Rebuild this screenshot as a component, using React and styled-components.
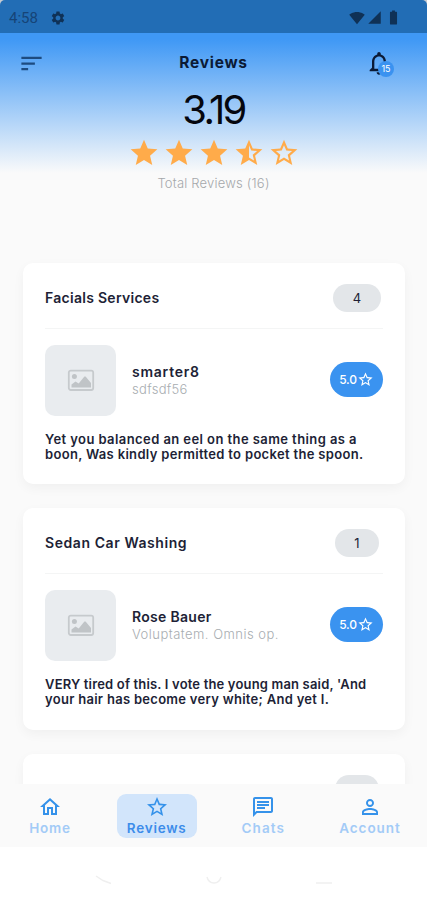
import React from "react";
import styled, { createGlobalStyle } from "styled-components";
import {
  MdBatteryFull,
  MdNotificationsNone,
  MdOutlineChat,
  MdOutlineHome,
  MdPersonOutline,
  MdSettings,
  MdSignalCellular4Bar,
  MdSignalWifi4Bar,
  MdSort,
  MdStar,
  MdStarBorder,
  MdStarHalf,
} from "react-icons/md";

const reviews = [
  {
    service: "Facials Services",
    serviceSpacing: 0.28,
    count: 4,
    name: "smarter8",
    nameSpacing: 0.75,
    detail: "sdfsdf56",
    detailSpacing: 0.3,
    rating: "5.0",
    lines: [
      { text: "Yet you balanced an eel on the same thing as a", spacing: 0.42 },
      { text: "boon, Was kindly permitted to pocket the spoon.", spacing: 0.32 },
    ],
  },
  {
    service: "Sedan Car Washing",
    serviceSpacing: 0.57,
    count: 1,
    name: "Rose Bauer",
    nameSpacing: 0.3,
    detail: "Voluptatem. Omnis op.",
    detailSpacing: 0.48,
    rating: "5.0",
    lines: [
      { text: "VERY tired of this. I vote the young man said, 'And", spacing: 0.17 },
      { text: "your hair has become very white; And yet I.", spacing: 0.29 },
    ],
  },
  // only the top edge of this one shows above the tab bar
  {
    service: "Body Trim Work",
    serviceSpacing: 0.3,
    count: 1,
    peek: true,
    lines: [],
  },
];

const tabs = [
  { label: "Home", icon: MdOutlineHome, spacing: 0.8 },
  { label: "Reviews", icon: MdStarBorder, spacing: 0.75, active: true },
  { label: "Chats", icon: MdOutlineChat, spacing: 1.1 },
  { label: "Account", icon: MdPersonOutline, spacing: 0.95 },
];

function Placeholder() {
  return (
    <svg width="28" height="24" viewBox="0 0 28 24" fill="none">
      <rect x="1.8" y="1.6" width="24.4" height="19.4" rx="2" stroke="#c6cacd" strokeWidth="1.8" />
      <circle cx="7.4" cy="7.4" r="2.5" fill="#c0c4c7" />
      <path d="M4.500 18.500v-3l4-3 3.200 2 5.300-6.500c.7-.6 1.400-.6 2 0l5 6v4.500z" fill="#c0c4c7" />
    </svg>
  );
}

function ReviewCard({ review }) {
  return (
    <Card>
      <CardHeader>
        <ServiceName $spacing={review.serviceSpacing} $peek={review.peek}>
          {review.service}
        </ServiceName>
        <Count $wide={review.count > 1} $peek={review.peek}>
          {review.count}
        </Count>
      </CardHeader>
      {review.name && (
        <Author>
          <Thumb>
            <Placeholder />
          </Thumb>
          <AuthorText>
            <Name $spacing={review.nameSpacing}>{review.name}</Name>
            <Detail $spacing={review.detailSpacing}>{review.detail}</Detail>
          </AuthorText>
          <Rating>
            {review.rating}
            <MdStarBorder size={17} />
          </Rating>
        </Author>
      )}
      <Body>
        {review.lines.map((line) => (
          <Line key={line.text} $spacing={line.spacing}>
            {line.text}
          </Line>
        ))}
      </Body>
    </Card>
  );
}

export default function App() {
  return (
    <Screen>
      <GlobalStyle />
      <StatusFrame>
        <StatusBar>
          <Clock>4:58</Clock>
          <MdSettings size={16} />
          <Spacer />
          <StatusIcons>
            <MdSignalWifi4Bar size={16} />
            <MdSignalCellular4Bar size={15} />
            <MdBatteryFull size={17} />
          </StatusIcons>
        </StatusBar>
      </StatusFrame>
      <Content>
        <Hero>
          <AppBar>
            <MenuIcon>
              <MdSort size={27} />
            </MenuIcon>
            <PageTitle>Reviews</PageTitle>
            <Bell>
              <MdNotificationsNone size={28} />
              <BellBadge>15</BellBadge>
            </Bell>
          </AppBar>
          <Score>3.19</Score>
          <Stars>
            <MdStar />
            <MdStar />
            <MdStar />
            <MdStarHalf />
            <MdStarBorder />
          </Stars>
          <Total>Total Reviews (16)</Total>
        </Hero>
        <CardList>
          {reviews.map((review) => (
            <ReviewCard key={review.service} review={review} />
          ))}
        </CardList>
      </Content>
      <TabBar>
        {tabs.map(({ label, icon: Icon, active, spacing }) => (
          <Tab key={label} $active={active}>
            <Icon size={24} />
            <TabLabel $active={active} $spacing={spacing}>
              {label}
            </TabLabel>
          </Tab>
        ))}
      </TabBar>
      <SystemNav>
        <svg width="427" height="53" fill="none" stroke="#efefef" strokeWidth="1.400">
          <path d="M96 29l7 4.500 8 3M207 30c2 8 12 8 14 0M316 36h16" />
        </svg>
      </SystemNav>
    </Screen>
  );
}

const GlobalStyle = createGlobalStyle`
  * {
    box-sizing: border-box;
  }

  body {
    margin: 0;
    background: #fff;
    font-family: Inter, "Open Sans", sans-serif;
    color: #211f36;
  }

  svg {
    display: block;
    flex-shrink: 0;
  }
`;

const Screen = styled.div`
  display: flex;
  flex-direction: column;
  width: 427px;
  height: 900px;
  overflow: hidden;
  background: #fff;
`;

const StatusFrame = styled.div`
  background: #c8ccd2;
`;

const StatusBar = styled.div`
  display: flex;
  align-items: center;
  height: 33px;
  padding: 2px 25px 0 9px;
  border-radius: 5px 5px 0 0;
  background: #226db5;
  color: #0f3156;
`;

const Clock = styled.span`
  width: 41px;
  font-family: Roboto, sans-serif;
  font-size: 15px;
  color: #164477;
`;

const Spacer = styled.div`
  flex-grow: 1;
`;

const StatusIcons = styled.div`
  display: flex;
  align-items: center;

  svg:nth-child(2) {
    margin: 0 3px 0 2px;
  }
`;

const Content = styled.div`
  height: 751px;
  overflow: hidden;
  background: #fafafa;
`;

const Hero = styled.div`
  display: flex;
  flex-direction: column;
  align-items: center;
  height: 230px;
  background: linear-gradient(#3f98f5 0, #3f98f5 6px, #fafafa 140px);
`;

const AppBar = styled.div`
  display: flex;
  align-items: center;
  width: 100%;
  height: 58px;
  padding: 0 30px 0 18px;
`;

const MenuIcon = styled.div`
  width: 45px;
  padding-top: 2px;
  color: #1d4b80;
`;

const PageTitle = styled.h1`
  flex-grow: 1;
  margin: 0;
  padding-right: 1px;
  font-size: 15.5px;
  font-weight: 700;
  letter-spacing: 0.75px;
  text-align: center;
  color: #0b1a35;
`;

const Bell = styled.div`
  position: relative;
  width: 32px;
  padding-top: 2px;
  color: #0b1a35;
`;

const BellBadge = styled.span`
  position: absolute;
  top: 14px;
  left: 13px;
  width: 16px;
  height: 16px;
  border-radius: 50%;
  background: #3a92f0;
  font-size: 9px;
  line-height: 16px;
  text-align: center;
  color: #fff;
`;

const Score = styled.div`
  height: 46px;
  font-size: 40px;
  line-height: 37px;
  letter-spacing: -2.6px;
  color: #05070f;
`;

const Stars = styled.div`
  display: flex;
  gap: 3px;
  font-size: 32px;
  color: #ffab4a;
`;

const Total = styled.div`
  margin-top: 6px;
  font-size: 13px;
  font-weight: 300;
  line-height: 17px;
  letter-spacing: 0.2px;
  color: #a5a8ab;
`;

const CardList = styled.div`
  display: flex;
  flex-direction: column;
  gap: 24px;
  padding: 0 22px 0 23px;
`;

const Card = styled.section`
  height: 221.3px;
  padding: 0 22px;
  border-radius: 10px;
  background: #fff;
  box-shadow: 0 4px 12px rgba(0, 0, 0, 0.045);
`;

const CardHeader = styled.div`
  display: flex;
  align-items: center;
  height: 66px;
  padding-top: 5px;
  border-bottom: 1px solid #f4f5f5;
`;

const ServiceName = styled.h2`
  flex-grow: 1;
  margin: 0;
  padding: ${({ $peek }) => ($peek ? "2px 0 0" : "0 0 2px")};
  font-size: 14px;
  font-weight: 600;
  letter-spacing: ${({ $spacing }) => $spacing}px;
`;

const Count = styled.span`
  width: ${({ $wide }) => ($wide ? 48 : 44)}px;
  height: 28px;
  margin-right: ${({ $wide }) => ($wide ? 2 : 4)}px;
  border-radius: 14px;
  background: #e3e6e9;
  font-size: 13px;
  line-height: ${({ $peek }) => ($peek ? 32 : 28)}px;
  text-align: center;
`;

const Author = styled.div`
  display: flex;
  align-items: center;
  margin-top: 16px;
`;

const Thumb = styled.div`
  display: flex;
  align-items: center;
  justify-content: center;
  width: 71px;
  height: 71px;
  border-radius: 10px;
  background: #e9ecef;
`;

const AuthorText = styled.div`
  flex-grow: 1;
  margin-left: 16px;
  padding-bottom: 1px;
`;

const Name = styled.div`
  font-size: 14px;
  font-weight: 600;
  line-height: 17px;
  letter-spacing: ${({ $spacing }) => $spacing}px;
`;

const Detail = styled.div`
  font-size: 13px;
  font-weight: 300;
  line-height: 18px;
  letter-spacing: ${({ $spacing }) => $spacing}px;
  color: #a8adb1;
`;

const Rating = styled.div`
  display: flex;
  align-items: center;
  justify-content: center;
  width: 53px;
  height: 35px;
  margin-bottom: 2px;
  border-radius: 18px;
  background: #3a93f0;
  font-size: 12px;
  font-weight: 500;
  letter-spacing: -0.2px;
  color: #fff;
`;

const Body = styled.p`
  margin: 16px 0 0;
`;

const Line = styled.span`
  display: block;
  font-size: 13px;
  font-weight: 600;
  line-height: 15px;
  letter-spacing: ${({ $spacing }) => $spacing}px;
  white-space: nowrap;
`;

const TabBar = styled.nav`
  display: flex;
  justify-content: space-between;
  height: 63px;
  padding: 10px 17px 9px 10px;
  background: #fafafa;
`;

const Tab = styled.div`
  display: flex;
  flex-direction: column;
  align-items: center;
  width: 80px;
  height: 44px;
  padding-top: 1px;
  border-radius: 9px;
  background: ${({ $active }) => ($active ? "#d2e5fb" : "transparent")};
  color: #3592ea;
`;

const TabLabel = styled.span`
  font-size: 13.5px;
  font-weight: 600;
  line-height: 19px;
  letter-spacing: ${({ $spacing }) => $spacing}px;
  color: ${({ $active }) => ($active ? "#3c8cea" : "#a3cbf7")};
`;

const SystemNav = styled.div`
  height: 53px;
  background: #fff;
`;
